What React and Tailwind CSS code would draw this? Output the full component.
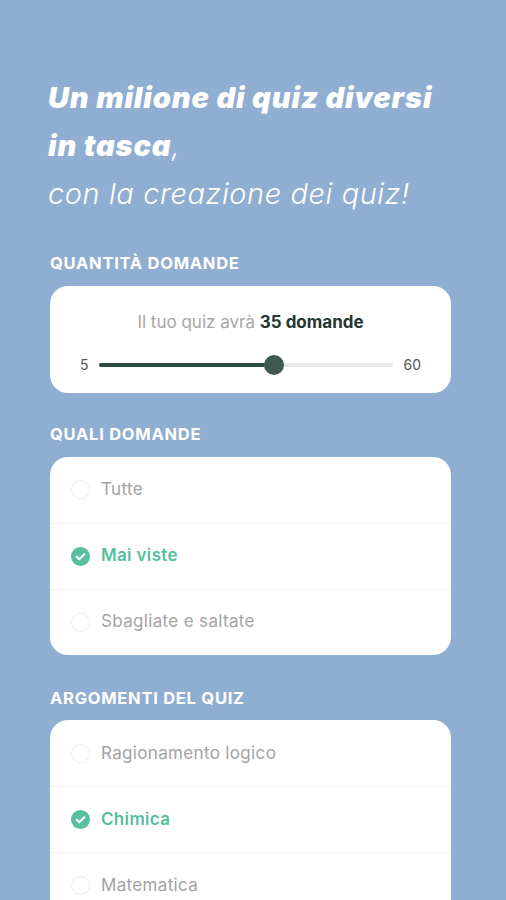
import React, { useState } from 'react';

const Radio = ({ checked }) =>
    checked ? (
        <svg width="19" height="19" viewBox="0 0 20 20" className="shrink-0">
            <circle cx="10" cy="10" r="10" fill="#55bf9f" />
            <path d="M6 10.3l2.7 2.6L14 7.6" fill="none" stroke="#fff" strokeWidth="2.2" strokeLinecap="round" strokeLinejoin="round" />
        </svg>
    ) : (
        <span className="w-[19px] h-[19px] shrink-0 rounded-full border border-[#ececec]"></span>
    );

const OptionCard = ({ options, selected }) => (
    <div className="bg-white rounded-[18px] overflow-hidden">
        {options.map((o, i) => (
            <div
                key={o}
                className={`flex items-center gap-[11px] h-[66px] px-[21px] ${i > 0 ? 'border-t border-[#f0f0f0]' : ''}`}
            >
                <Radio checked={o === selected} />
                <span className={o === selected ? 'text-[17px] tracking-[0.02em] font-semibold text-[#55bf9f]' : 'text-[17px] tracking-[0.02em] text-[#a3a3a3]'}>{o}</span>
            </div>
        ))}
    </div>
);

const SectionLabel = ({ children }) => (
    <h2 className="text-[16.5px] font-bold text-white tracking-[0.045em] mb-[10px]">{children}</h2>
);

export default function App() {
    const [count] = useState(35);
    // thumb sits a bit past the linear midpoint in the original
    const pct = 59.4;

    return (
        <div className="h-[900px] overflow-hidden bg-[#90aed1] px-[48px] pt-[74px]" style={{ fontFamily: 'Inter, "Noto Sans", sans-serif' }}>
            <div className="text-white text-[29px] leading-[48px] italic mb-[33px]">
                <div className="font-black tracking-[0.03em]">Un milione di quiz diversi</div>
                <div><span className="font-black tracking-[0.03em]">in tasca</span><span className="font-light">,</span></div>
                <div className="font-light tracking-[0.02em]">con la creazione dei quiz!</div>
            </div>

            <div className="pl-[2px] pr-[7px]">
                <SectionLabel>QUANTITÀ DOMANDE</SectionLabel>
                <div className="bg-white rounded-[18px] h-[107px] pt-[24px] px-[30px] mb-[29px]">
                    <p className="text-center text-[17px] text-[#a6a6a6]">
                        Il tuo quiz avrà <span className="font-bold text-[#253530]">{count} domande</span>
                    </p>
                    <div className="flex items-center gap-[10px] mt-[19px] text-[14px] text-[#555]">
                        <span className="w-[9px]">5</span>
                        <div className="relative flex-1 h-[4px] rounded-full bg-[#e6e6e6]">
                            <div className="absolute left-0 top-0 h-full rounded-full bg-[#2c4a3f]" style={{ width: `${pct}%` }}></div>
                            <div className="absolute top-1/2 w-[20px] h-[20px] -translate-x-1/2 -translate-y-1/2 rounded-full bg-[#3e5a50]" style={{ left: `${pct}%` }}></div>
                        </div>
                        <span>60</span>
                    </div>
                </div>

                <SectionLabel>QUALI DOMANDE</SectionLabel>
                <div className="mb-[31px]">
                    <OptionCard options={['Tutte', 'Mai viste', 'Sbagliate e saltate']} selected="Mai viste" />
                </div>

                <SectionLabel>ARGOMENTI DEL QUIZ</SectionLabel>
                <OptionCard options={['Ragionamento logico', 'Chimica', 'Matematica']} selected="Chimica" />
            </div>
        </div>
    );
}
